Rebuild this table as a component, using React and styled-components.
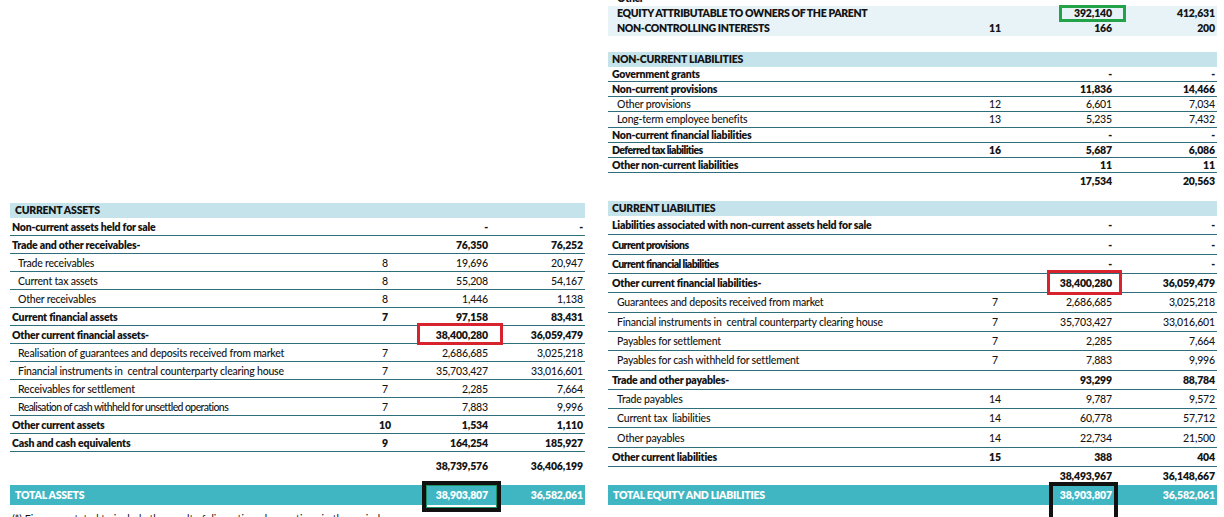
import React from "react";
import styled, { createGlobalStyle } from "styled-components";

const GlobalStyle = createGlobalStyle`
  body {
    margin: 0;
    background: #ffffff;
    font-family: Lato, "Open Sans", sans-serif;
    color: #141414;
  }
`;

const LEFT_COLS = "1fr 50px 78px 95px";
const RIGHT_COLS = "1fr 50px 92px 103px";

const leftRows = [
  { label: "Non-current assets held for sale", v1: "-", v2: "-", bold: true },
  { label: "Trade and other receivables-", v1: "76,350", v2: "76,252", bold: true },
  { label: "Trade receivables", note: "8", v1: "19,696", v2: "20,947" },
  { label: "Current tax assets", note: "8", v1: "55,208", v2: "54,167" },
  { label: "Other receivables", note: "8", v1: "1,446", v2: "1,138" },
  { label: "Current financial assets", note: "7", v1: "97,158", v2: "83,431", bold: true },
  {
    label: "Other current financial assets-",
    v1: "38,400,280",
    v2: "36,059,479",
    bold: true,
    mark: { color: "#d7232e", top: -6, bottom: -4, left: 7, right: -15, w: 3 },
  },
  { label: "Realisation of guarantees and deposits received from market", note: "7", v1: "2,686,685", v2: "3,025,218" },
  { label: "Financial instruments in  central counterparty clearing house", note: "7", v1: "35,703,427", v2: "33,016,601" },
  { label: "Receivables for settlement", note: "7", v1: "2,285", v2: "7,664" },
  { label: "Realisation of cash withheld for unsettled operations", note: "7", v1: "7,883", v2: "9,996", tight: true },
  { label: "Other current assets", note: "10", v1: "1,534", v2: "1,110", bold: true },
  { label: "Cash and cash equivalents", note: "9", v1: "164,254", v2: "185,927", bold: true },
];

const nonCurrentRows = [
  { label: "Government grants", v1: "-", v2: "-", bold: true },
  { label: "Non-current provisions", v1: "11,836", v2: "14,466", bold: true },
  { label: "Other provisions", note: "12", v1: "6,601", v2: "7,034" },
  { label: "Long-term employee benefits", note: "13", v1: "5,235", v2: "7,432" },
  { label: "Non-current financial liabilities", v1: "-", v2: "-", bold: true },
  { label: "Deferred tax liabilities", note: "16", v1: "5,687", v2: "6,086", bold: true, tight: true },
  { label: "Other non-current liabilities", v1: "11", v2: "11", bold: true },
];

const currentRows = [
  { label: "Liabilities associated with non-current assets held for sale", v1: "-", v2: "-", bold: true },
  { label: "Current provisions", v1: "-", v2: "-", bold: true, tight: true },
  { label: "Current financial liabilities", v1: "-", v2: "-", bold: true, tight: true },
  {
    label: "Other current financial liabilities-",
    v1: "38,400,280",
    v2: "36,059,479",
    bold: true,
    mark: { color: "#d7232e", top: -7, bottom: -6, left: 27, right: -10, w: 3 },
  },
  { label: "Guarantees and deposits received from market", note: "7", v1: "2,686,685", v2: "3,025,218" },
  { label: "Financial instruments in  central counterparty clearing house", note: "7", v1: "35,703,427", v2: "33,016,601" },
  { label: "Payables for settlement", note: "7", v1: "2,285", v2: "7,664" },
  { label: "Payables for cash withheld for settlement", note: "7", v1: "7,883", v2: "9,996" },
  { label: "Trade and other payables-", v1: "93,299", v2: "88,784", bold: true },
  { label: "Trade payables", note: "14", v1: "9,787", v2: "9,572" },
  { label: "Current tax  liabilities", note: "14", v1: "60,778", v2: "57,712" },
  { label: "Other payables", note: "14", v1: "22,734", v2: "21,500" },
  { label: "Other current liabilities", note: "15", v1: "388", v2: "404", bold: true },
];

const equityRows = [
  { label: "Other", v1: "-", v2: "-" },
  {
    label: "EQUITY ATTRIBUTABLE TO OWNERS OF THE PARENT",
    v1: "392,140",
    v2: "412,631",
    mark: { color: "#22a347", top: -2, bottom: -3, left: 39, right: -14, w: 3 },
  },
  { label: "NON-CONTROLLING INTERESTS", note: "11", v1: "166", v2: "200" },
];

function StatementRow({ row, cols, height, subIndent, boldIndent }) {
  const sub = !row.bold;
  return (
    <Row $cols={cols} $height={height}>
      <Label $bold={row.bold} $tight={row.tight} $indent={sub ? subIndent : boldIndent}>
        {row.label}
      </Label>
      <Note $bold={row.bold}>{row.note}</Note>
      <Value $bold={row.bold}>
        {row.v1}
        {row.mark && <Mark $m={row.mark} />}
      </Value>
      <Value $bold={row.bold}>{row.v2}</Value>
    </Row>
  );
}

function App() {
  return (
    <>
      <GlobalStyle />
      <Page>
        <Column $width={575}>
          <SectionHeader $indent={5}>CURRENT ASSETS</SectionHeader>
          {leftRows.map((r) => (
            <StatementRow key={r.label} row={r} cols={LEFT_COLS} height={18} subIndent={8} boldIndent={2} />
          ))}
          <Subtotal $cols={LEFT_COLS} $height={28} $gap={5}>
            <span />
            <span />
            <Value $bold>38,739,576</Value>
            <Value $bold>36,406,199</Value>
          </Subtotal>
          <TotalBand $cols={LEFT_COLS}>
            <TotalLabel>TOTAL ASSETS</TotalLabel>
            <span />
            <TotalValue>
              38,903,807
              <Mark $m={{ color: "#111", top: -8, bottom: -11, left: 12, right: -13, w: 4 }} $inner />
            </TotalValue>
            <TotalValue>36,582,061</TotalValue>
          </TotalBand>
          <Footnote>(*) Figures restated to include the result of discontinued operations in the period</Footnote>
        </Column>

        <Column $width={609}>
          {equityRows.map((r) => (
            <EquityRow key={r.label} $cols={RIGHT_COLS} $shaded={r.label !== "Other"}>
              <Label $bold $caps $indent={9}>
                {r.label}
              </Label>
              <Note $bold>{r.note}</Note>
              <Value $bold>
                {r.v1}
                {r.mark && <Mark $m={r.mark} />}
              </Value>
              <Value $bold>{r.v2}</Value>
            </EquityRow>
          ))}
          <Spacer $h={16} />
          <SectionHeader $indent={4}>NON-CURRENT LIABILITIES</SectionHeader>
          {nonCurrentRows.map((r) => (
            <StatementRow key={r.label} row={r} cols={RIGHT_COLS} height={15.2} subIndent={9} boldIndent={4} />
          ))}
          <Subtotal $cols={RIGHT_COLS} $height={16} $gap={12}>
            <span />
            <span />
            <Value $bold>17,534</Value>
            <Value $bold>20,563</Value>
          </Subtotal>
          <SectionHeader $indent={4}>CURRENT LIABILITIES</SectionHeader>
          {currentRows.map((r) => (
            <StatementRow key={r.label} row={r} cols={RIGHT_COLS} height={19.3} subIndent={9} boldIndent={4} />
          ))}
          <Subtotal $cols={RIGHT_COLS} $height={15} $gap={3} $align="end">
            <span />
            <span />
            <Value $bold>38,493,967</Value>
            <Value $bold>36,148,667</Value>
          </Subtotal>
          <TotalBand $cols={RIGHT_COLS}>
            <TotalLabel>TOTAL EQUITY AND LIABILITIES</TotalLabel>
            <span />
            <TotalValue>
              38,903,807
              <Mark $m={{ color: "#111", top: -7, bottom: -20, left: 29, right: -6, w: 4 }} />
            </TotalValue>
            <TotalValue>36,582,061</TotalValue>
          </TotalBand>
          <Spacer $h={12} />
        </Column>
      </Page>
    </>
  );
}

// Layout

const Page = styled.div`
  display: flex;
  align-items: flex-end;
  gap: 23px;
  height: 517px;
  padding: 0 7px 0 10px;
  overflow: hidden;
  box-sizing: border-box;
`;
const Column = styled.div`
  display: flex;
  flex-direction: column;
  flex: 0 0 ${(p) => p.$width}px;
  width: ${(p) => p.$width}px;
`;
const Spacer = styled.div`
  height: ${(p) => p.$h}px;
  flex: 0 0 auto;
`;

// Table parts

const SectionHeader = styled.div`
  height: 15px;
  line-height: 15px;
  padding-left: ${(p) => p.$indent}px;
  background: #c5e3ea;
  font-size: 10.5px;
  font-weight: 800;
  letter-spacing: -0.25px;
  flex: 0 0 auto;
`;
const Row = styled.div`
  display: grid;
  grid-template-columns: ${(p) => p.$cols};
  align-items: center;
  height: ${(p) => p.$height}px;
  padding-right: 2px;
  border-bottom: 1px solid #2f6f7c;
  box-sizing: border-box;
  font-size: 10.5px;
  flex: 0 0 auto;
`;
const EquityRow = styled(Row)`
  height: 15px;
  border-bottom: none;
  background: ${(p) => (p.$shaded ? "#e7f3f6" : "transparent")};
`;
const Subtotal = styled(Row)`
  border-bottom: none;
  height: ${(p) => p.$height}px;
  margin-bottom: ${(p) => p.$gap}px;
  align-items: ${(p) => (p.$align === "end" ? "end" : "center")};
`;
const Label = styled.span`
  padding-left: ${(p) => p.$indent}px;
  font-weight: ${(p) => (p.$bold ? 800 : 500)};
  letter-spacing: ${(p) => (p.$tight ? "-0.6px" : p.$caps ? "-0.35px" : "-0.2px")};
  white-space: pre;
  overflow: hidden;
`;
const Note = styled.span`
  text-align: center;
  font-weight: ${(p) => (p.$bold ? 800 : 500)};
`;
const Value = styled.span`
  position: relative;
  text-align: right;
  font-weight: ${(p) => (p.$bold ? 800 : 500)};
  letter-spacing: -0.15px;
`;
const Mark = styled.span`
  position: absolute;
  top: ${(p) => p.$m.top}px;
  bottom: ${(p) => p.$m.bottom}px;
  left: ${(p) => p.$m.left}px;
  right: ${(p) => p.$m.right}px;
  border: ${(p) => p.$m.w}px solid ${(p) => p.$m.color};
  box-shadow: ${(p) => (p.$inner ? "inset 0 0 0 1px #1f8f66" : "none")};
  pointer-events: none;
`;
const TotalBand = styled.div`
  display: grid;
  grid-template-columns: ${(p) => p.$cols};
  align-items: center;
  height: 20px;
  padding-right: 2px;
  background: #3fb6c2;
  color: #ffffff;
  font-size: 10.5px;
  font-weight: 800;
  flex: 0 0 auto;
`;
const TotalLabel = styled.span`
  padding-left: 5px;
  letter-spacing: -0.25px;
`;
const TotalValue = styled.span`
  position: relative;
  text-align: right;
  letter-spacing: -0.15px;
`;
const Footnote = styled.div`
  height: 12px;
  padding-top: 8px;
  box-sizing: border-box;
  overflow: hidden;
  font-size: 10.5px;
  line-height: 12px;
  padding-left: 2px;
  white-space: nowrap;
  flex: 0 0 auto;
`;

export default App;
